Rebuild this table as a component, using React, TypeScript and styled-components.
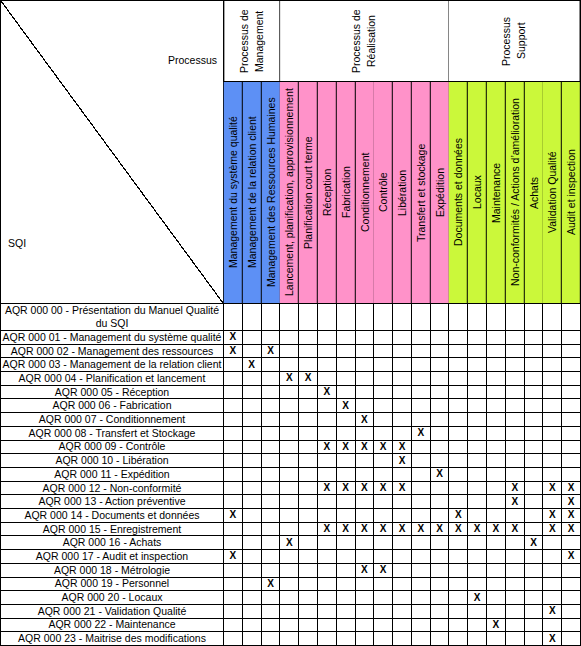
import styled, { createGlobalStyle } from "styled-components";

type Group = "mgmt" | "real" | "supp";

const groupColors: Record<Group, string> = {
  mgmt: "#5d90f5",
  real: "#ff92c9",
  supp: "#cbf83a",
};

const groups = [
  { lines: ["Processus de", "Management"], span: 3 },
  { lines: ["Processus de", "Réalisation"], span: 9 },
  { lines: ["Processus", "Support"], span: 7 },
];

const processes: { label: string; group: Group }[] = [
  { label: "Management du système qualité", group: "mgmt" },
  { label: "Management de la relation client", group: "mgmt" },
  { label: "Management des Ressources Humaines", group: "mgmt" },
  { label: "Lancement, planification, approvisionnement", group: "real" },
  { label: "Planification court terme", group: "real" },
  { label: "Réception", group: "real" },
  { label: "Fabrication", group: "real" },
  { label: "Conditionnement", group: "real" },
  { label: "Contrôle", group: "real" },
  { label: "Libération", group: "real" },
  { label: "Transfert et stockage", group: "real" },
  { label: "Expédition", group: "real" },
  { label: "Documents et données", group: "supp" },
  { label: "Locaux", group: "supp" },
  { label: "Maintenance", group: "supp" },
  { label: "Non-conformités / Actions d’amélioration", group: "supp" },
  { label: "Achats", group: "supp" },
  { label: "Validation Qualité", group: "supp" },
  { label: "Audit et inspection", group: "supp" },
];

const procedures: { label: string[]; marks: number[] }[] = [
  { label: ["AQR 000 00 - Présentation du Manuel Qualité", "du SQI"], marks: [] },
  { label: ["AQR 000 01 - Management du système qualité"], marks: [0] },
  { label: ["AQR 000 02 - Management des ressources"], marks: [0, 2] },
  { label: ["AQR 000 03 - Management de la relation client"], marks: [1] },
  { label: ["AQR 000 04 - Planification et lancement"], marks: [3, 4] },
  { label: ["AQR 000 05 - Réception"], marks: [5] },
  { label: ["AQR 000 06 - Fabrication"], marks: [6] },
  { label: ["AQR 000 07 - Conditionnement"], marks: [7] },
  { label: ["AQR 000 08 - Transfert et Stockage"], marks: [10] },
  { label: ["AQR 000 09 - Contrôle"], marks: [5, 6, 7, 8, 9] },
  { label: ["AQR 000 10 - Libération"], marks: [9] },
  { label: ["AQR 000 11 - Expédition"], marks: [11] },
  { label: ["AQR 000 12 - Non-conformité"], marks: [5, 6, 7, 8, 9, 15, 17, 18] },
  { label: ["AQR 000 13 - Action préventive"], marks: [15, 18] },
  { label: ["AQR 000 14 - Documents et données"], marks: [0, 12, 17, 18] },
  { label: ["AQR 000 15 - Enregistrement"], marks: [5, 6, 7, 8, 9, 10, 11, 12, 13, 14, 15, 17, 18] },
  { label: ["AQR 000 16 - Achats"], marks: [3, 16] },
  { label: ["AQR 000 17 - Audit et inspection"], marks: [0, 18] },
  { label: ["AQR 000 18 - Métrologie"], marks: [7, 8] },
  { label: ["AQR 000 19 - Personnel"], marks: [2] },
  { label: ["AQR 000 20 - Locaux"], marks: [13] },
  { label: ["AQR 000 21 - Validation Qualité"], marks: [17] },
  { label: ["AQR 000 22 - Maintenance"], marks: [14] },
  { label: ["AQR 000 23 - Maitrise des modifications"], marks: [17] },
];

export default function App() {
  return (
    <>
      <GlobalStyle />
      <Sheet>
        <Corner>
          <span className="proc">Processus</span>
          <span className="sqi">SQI</span>
        </Corner>

        {groups.map((g, gIndex) => (
          <GroupHeader key={`g${gIndex}`} $span={g.span}>
            <span>
              {g.lines[0]}
              <br />
              {g.lines[1]}
            </span>
          </GroupHeader>
        ))}

        {processes.map((p, pIndex) => (
          <ProcessHeader key={`p${pIndex}`} $color={groupColors[p.group]}>
            <span>{p.label}</span>
          </ProcessHeader>
        ))}

        {procedures.map((row, rIndex) => (
          <Row key={`r${rIndex}`}>
            <ProcedureLabel>
              {row.label.map((line, lIndex) => (
                <span key={`${lIndex}`}>{line}</span>
              ))}
            </ProcedureLabel>
            {processes.map((_, cIndex) => (
              <MarkCell key={`c${cIndex}`}>
                {row.marks.includes(cIndex) ? "X" : ""}
              </MarkCell>
            ))}
          </Row>
        ))}
      </Sheet>
    </>
  );
}

const GlobalStyle = createGlobalStyle`
  html, body {
    margin: 0;
    padding: 0;
    background: #fff;
  }
  body {
    font-family: "Liberation Sans", Arial, sans-serif;
    font-size: 10.5px;
    color: #000;
  }
`;

const Sheet = styled.div`
  width: 581px;
  height: 646px;
  box-sizing: border-box;
  display: grid;
  grid-template-columns: 222px repeat(19, 1fr);
  grid-template-rows: 80px 221px 26px repeat(23, 1fr);
  gap: 1px;
  padding: 1px;
  background-color: #000;
`;

const Row = styled.div`
  display: contents;
`;

const Corner = styled.div`
  grid-row: 1 / span 2;
  grid-column: 1;
  display: flex;
  flex-direction: column;
  justify-content: space-between;
  padding: 53px 6px 53px 7px;
  line-height: 13px;
  background: linear-gradient(
    to top right,
    #fff calc(50% - 0.6px),
    #000 calc(50% - 0.6px),
    #000 calc(50% + 0.6px),
    #fff calc(50% + 0.6px)
  );

  .proc {
    align-self: flex-end;
  }
  .sqi {
    align-self: flex-start;
  }
`;

// cells whose text reads bottom to top
const VerticalCell = styled.div`
  writing-mode: vertical-rl;
  transform: rotate(180deg);
  display: flex;
  align-items: center;
  justify-content: center;
  text-align: center;
  white-space: nowrap;
  overflow: hidden;
`;

const GroupHeader = styled(VerticalCell)<{ $span: number }>`
  grid-row: 1;
  grid-column: span ${(p) => p.$span};
  background-color: #fff;
  line-height: 15px;
`;

const ProcessHeader = styled(VerticalCell)<{ $color: string }>`
  grid-row: 2;
  background-color: ${(p) => p.$color};
  line-height: 14px;
`;

const ProcedureLabel = styled.div`
  background-color: #fff;
  display: flex;
  flex-direction: column;
  align-items: center;
  justify-content: center;
  line-height: 13px;
  white-space: nowrap;
  overflow: hidden;
`;

const MarkCell = styled.div`
  background-color: #fff;
  display: flex;
  align-items: center;
  justify-content: center;
  font-weight: bold;
  font-size: 10px;
  line-height: 1;
`;
